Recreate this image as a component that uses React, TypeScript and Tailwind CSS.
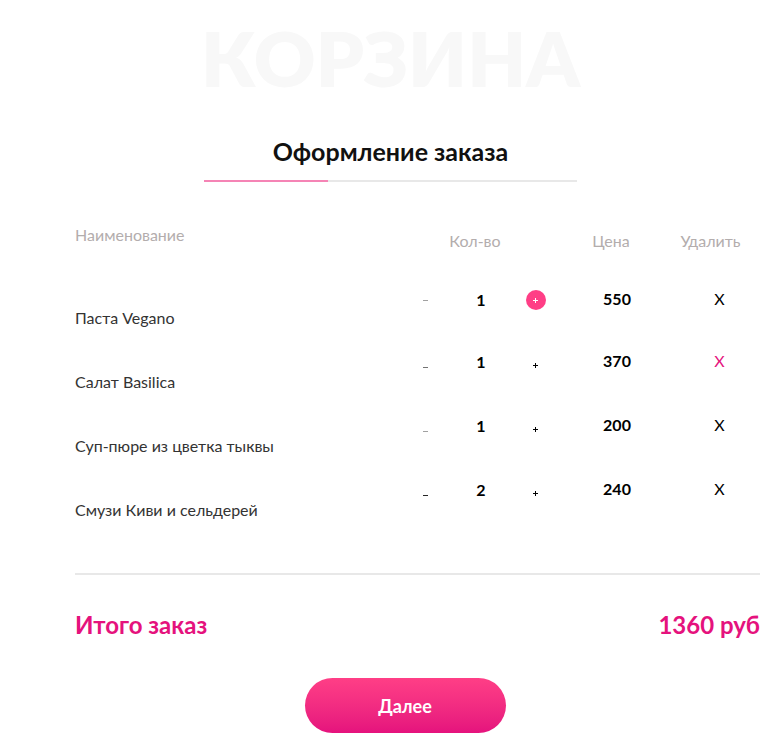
import { useState } from "react";

type Item = {
  name: string;
  quantity: number;
  price: number;
  active?: boolean;
  marked?: boolean;
  minus: string;
};

const initialItems: Item[] = [
  { name: "Паста Vegano", quantity: 1, price: 550, active: true, minus: "bg-neutral-400" },
  { name: "Салат Basilica", quantity: 1, price: 370, marked: true, minus: "bg-neutral-500" },
  { name: "Суп-пюре из цветка тыквы", quantity: 1, price: 200, minus: "bg-neutral-400" },
  { name: "Смузи Киви и сельдерей", quantity: 2, price: 240, minus: "bg-neutral-800" },
];

function PlusIcon() {
  return (
    <svg width="5" height="5" viewBox="0 0 5 5" aria-hidden="true">
      <path d="M2 0h1v2h2v1H3v2H2V3H0V2h2z" fill="currentColor" />
    </svg>
  );
}

export default function App() {
  const [items, setItems] = useState(initialItems);

  const change = (index: number, step: number) =>
    setItems(items.map((item, i) => (i === index ? { ...item, quantity: Math.max(1, item.quantity + step) } : item)));

  return (
    <main className="bg-white pt-[18px] pr-2.5 pb-4 pl-[75px] font-['Lato',sans-serif] text-base leading-6 text-[#111]">
      <header className="-ml-[54px] flex flex-col items-center">
        <h1 className="text-[76px] leading-20 font-extrabold text-[#f8f8f8]">КОРЗИНА</h1>
        <h2 className="mt-[37px] text-[25px] leading-8 font-bold">Оформление заказа</h2>
        <div className="mt-[13px] h-0.5 w-full max-w-[373px] bg-[#e8e8e8]">
          <div className="h-full w-1/3 bg-[#f584b5]" />
        </div>
      </header>

      <table className="mt-[41px] w-full table-fixed">
        <colgroup>
          <col />
          <col className="w-[54px]" />
          <col className="w-14" />
          <col className="w-[54px]" />
          <col className="w-[108px]" />
          <col className="w-[89px]" />
        </colgroup>
        <thead>
          <tr className="h-[62px] align-top text-[#b3adad]">
            <th scope="col" className="text-left font-normal">Наименование</th>
            <th scope="col" colSpan={3} className="pt-1.5 pr-3 font-normal">Кол-во</th>
            <th scope="col" className="pt-1.5 pr-3 font-normal">Цена</th>
            <th scope="col" className="pt-1.5 pr-2.5 font-normal">Удалить</th>
          </tr>
        </thead>
        <tbody>
          {items.map((item, index) => (
            <tr key={item.name} className="h-16 text-center align-top">
              <td className="pt-[21px] text-left text-[#333]">{item.name}</td>
              <td className={item.active ? "pt-[5px]" : "pt-2"}>
                <button
                  type="button"
                  aria-label={`Уменьшить: ${item.name}`}
                  onClick={() => change(index, -1)}
                  className="mx-auto flex size-5 items-center justify-center"
                >
                  <span className={`h-px w-[5px] ${item.minus}`} />
                </button>
              </td>
              <td className={item.active ? "pt-[3px] font-bold text-black" : "pt-px font-bold text-black"}>
                {item.quantity}
              </td>
              <td className={item.active ? "pt-[5px]" : "pt-1.5"}>
                <button
                  type="button"
                  aria-label={`Увеличить: ${item.name}`}
                  onClick={() => change(index, 1)}
                  className={`mx-auto flex size-5 items-center justify-center rounded-full ${
                    item.active ? "bg-[#ff3e86] text-white" : "text-black"
                  }`}
                >
                  <PlusIcon />
                </button>
              </td>
              <td className={item.active ? "pt-0.5 font-bold text-black" : "font-bold text-black"}>{item.price}</td>
              <td className={item.active ? "pt-0.5 pl-2" : "pl-2"}>
                <button
                  type="button"
                  aria-label={`Удалить: ${item.name}`}
                  onClick={() => setItems(items.filter((_, i) => i !== index))}
                  className={item.marked ? "text-[#e5127d]" : "text-black"}
                >
                  X
                </button>
              </td>
            </tr>
          ))}
        </tbody>
      </table>

      <div className="mt-8 flex justify-between border-t-2 border-[#e8e8e8] pt-[34px] text-2xl leading-8 font-bold text-[#e5127d]">
        <span>Итого заказ</span>
        <span>1360 руб</span>
      </div>

      <div className="mt-[37px] -ml-[25px] flex justify-center">
        <button
          type="button"
          className="h-[55px] w-[201px] rounded-full bg-linear-to-b from-[#ff3e86] to-[#e5127d] text-lg leading-6 font-bold text-white"
        >
          Далее
        </button>
      </div>
    </main>
  );
}
